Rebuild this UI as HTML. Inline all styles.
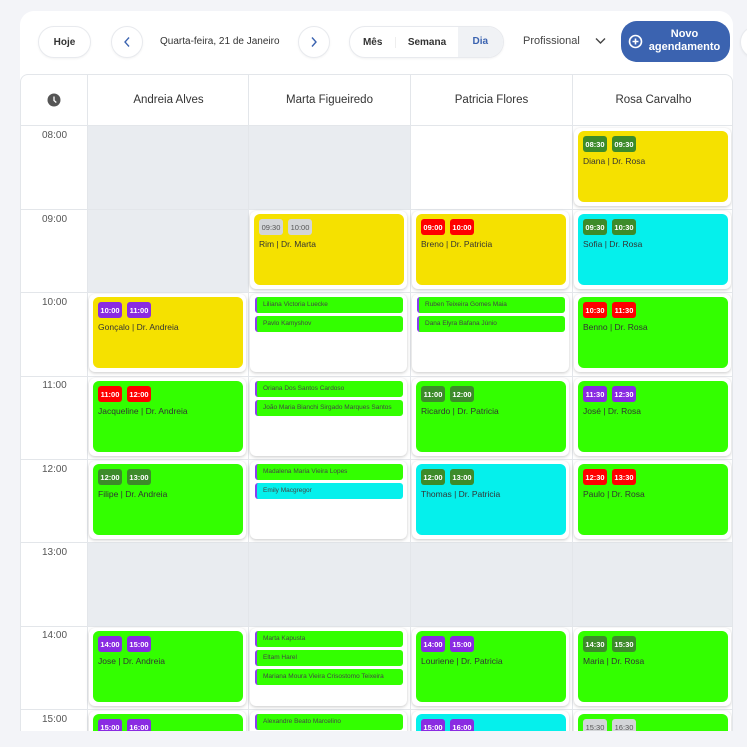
<!DOCTYPE html>
<html><head><meta charset="utf-8"><style>
*{box-sizing:border-box;margin:0;padding:0}
html,body{width:747px;height:747px;overflow:hidden}
body{background:#f3f4f8;font-family:"Liberation Sans",sans-serif;position:relative}
.root{position:absolute;left:0;top:0;width:747px;height:747px;overflow:hidden}
.wrap{position:absolute;left:20px;top:11px;width:713px;height:720px;background:#fff;border-radius:14px 14px 0 0}
.btn{position:absolute;border:1px solid #e8eaee;border-radius:18px;background:#fff;font-size:10px;color:#333;display:flex;align-items:center;justify-content:center;box-shadow:0 1px 2px rgba(0,0,0,.05)}
.grid{position:absolute;left:20px;top:74px;width:713px;height:657px;overflow:hidden;border:1px solid #e3e6ea;border-radius:8px 8px 0 0;border-bottom:none;background:#fff}
.a{position:absolute}
.vl{position:absolute;top:0;width:1px;height:700px;background:#e3e6ea}
.hl{position:absolute;left:0;width:713px;height:1px;background:#e3e6ea}
.gr{position:absolute;background:#e9ecf0}
.hd{position:absolute;top:0;height:50px;width:161px;display:flex;align-items:center;justify-content:center;font-size:11.5px;color:#333}
.tm{position:absolute;left:0;width:67px;text-align:center;font-size:10px;color:#555}
.card{position:absolute;width:157px;height:78px;background:#fff;border-radius:6px;box-shadow:0 1px 3px rgba(0,0,0,.22)}
.in{position:absolute;left:4px;top:3px;width:150px;height:71px;border-radius:6px}
.b{position:absolute;top:5px;width:24px;height:16px;border-radius:3px;color:#fff;font-size:7.5px;font-weight:bold;display:flex;align-items:center;justify-content:center}
.b1{left:5px}.b2{left:34px}
.nm{position:absolute;left:5px;top:25px;font-size:8.5px;color:#333}
.li{margin:0 0 3px 0;width:148px;height:16px;border-radius:3px;border-left:2px solid #8a3df0;font-size:6.5px;color:#444;padding-left:6px;line-height:16px;white-space:nowrap;overflow:hidden}
.lst{position:absolute;left:5px;top:3px}
.y{background:#f5e100}.g{background:#33ff00}.c{background:#05f0ec}
.p{background:#8a2be2}.r{background:#ff0000}.d{background:#3d8b2a}.s{background:#d3d5d8;color:#555;font-weight:normal}
</style></head><body><div class="root">
<div class="wrap"></div>
<div class="btn" style="left:38px;top:26px;width:53px;height:32px;font-weight:bold">Hoje</div>
<div class="btn" style="left:111px;top:26px;width:32px;height:32px"><svg width="8" height="12"><path d="M6 1.5L2 6l4 4.5" stroke="#3b63b0" stroke-width="1.4" fill="none"/></svg></div>
<div class="a" style="left:160px;top:36px;font-size:10px;color:#333">Quarta-feira, 21 de Janeiro</div>
<div class="btn" style="left:298px;top:26px;width:32px;height:32px"><svg width="8" height="12"><path d="M2 1.5L6 6l-4 4.5" stroke="#3b63b0" stroke-width="1.4" fill="none"/></svg></div>
<div class="btn" style="left:349px;top:26px;width:155px;height:32px;justify-content:flex-start;overflow:hidden">
<div style="width:46px;text-align:center;font-weight:bold">Mês</div>
<div style="width:63px;text-align:center;font-weight:bold;border-left:1px solid #eee">Semana</div>
<div style="width:46px;height:32px;line-height:32px;text-align:center;font-weight:bold;background:#f0f2f5;color:#3b63b0">Dia</div></div>
<div class="a" style="left:523px;top:35px;font-size:11px;color:#444">Profissional</div>
<svg class="a" style="left:595px;top:37px" width="11" height="8"><path d="M1 1.5l4.5 4.5 4.5-4.5" stroke="#444" stroke-width="1.4" fill="none"/></svg>
<div class="a" style="left:621px;top:21px;width:109px;height:41px;background:#3b63b0;border-radius:16px;color:#fff;font-size:11px;font-weight:bold;text-align:center;line-height:13px;padding-top:7px;padding-left:18px">Novo<br>agendamento</div>
<svg class="a" style="left:628px;top:34px" width="15" height="15"><circle cx="7.5" cy="7.5" r="6" stroke="#fff" stroke-width="1.6" fill="none"/><path d="M7.5 4.5v6M4.5 7.5h6" stroke="#fff" stroke-width="1.6"/></svg>
<div class="btn" style="left:740px;top:26px;width:32px;height:32px"></div>

<div class="grid">
<div class="gr" style="left:67px;top:51px;width:161px;height:167px"></div>
<div class="gr" style="left:228px;top:51px;width:162px;height:83px"></div>
<div class="gr" style="left:67px;top:468px;width:646px;height:83px"></div>
<div class="vl" style="left:66px"></div><div class="vl" style="left:227px"></div><div class="vl" style="left:389px"></div><div class="vl" style="left:551px"></div>
<div class="hl" style="top:50px"></div><div class="hl" style="top:134px"></div><div class="hl" style="top:217px"></div><div class="hl" style="top:301px"></div><div class="hl" style="top:384px"></div><div class="hl" style="top:467px"></div><div class="hl" style="top:551px"></div><div class="hl" style="top:634px"></div>
<svg class="a" style="left:26px;top:18px" width="14" height="14"><circle cx="7" cy="7" r="6.5" fill="#555"/><path d="M7 3.5v4l2.3 2" stroke="#fff" stroke-width="1.3" fill="none"/></svg>
<div class="hd" style="left:67px">Andreia Alves</div><div class="hd" style="left:228px">Marta Figueiredo</div><div class="hd" style="left:390px">Patricia Flores</div><div class="hd" style="left:552px">Rosa Carvalho</div>
<div class="tm" style="top:55px">08:00</div><div class="tm" style="top:139px">09:00</div><div class="tm" style="top:222px">10:00</div><div class="tm" style="top:305px">11:00</div><div class="tm" style="top:389px">12:00</div><div class="tm" style="top:472px">13:00</div><div class="tm" style="top:555px">14:00</div><div class="tm" style="top:639px">15:00</div>

<div class="card" style="left:553px;top:53px"><div class="in y"><div class="b b1 d">08:30</div><div class="b b2 d">09:30</div><div class="nm">Diana | Dr. Rosa</div></div></div>
<div class="card" style="left:229px;top:136px"><div class="in y"><div class="b b1 s">09:30</div><div class="b b2 s">10:00</div><div class="nm">Rim | Dr. Marta</div></div></div>
<div class="card" style="left:391px;top:136px"><div class="in y"><div class="b b1 r">09:00</div><div class="b b2 r">10:00</div><div class="nm">Breno | Dr. Patricia</div></div></div>
<div class="card" style="left:553px;top:136px"><div class="in c"><div class="b b1 d">09:30</div><div class="b b2 d">10:30</div><div class="nm">Sofia | Dr. Rosa</div></div></div>
<div class="card" style="left:68px;top:219px"><div class="in y"><div class="b b1 p">10:00</div><div class="b b2 p">11:00</div><div class="nm">Gonçalo | Dr. Andreia</div></div></div>
<div class="card" style="left:229px;top:219px"><div class="lst"><div class="li g">Liliana Victoria Luecke</div><div class="li g">Pavlo Kamyshov</div></div></div>
<div class="card" style="left:391px;top:219px"><div class="lst"><div class="li g">Ruben Teixeira Gomes Maia</div><div class="li g">Dana Elyra Bafana Júnio</div></div></div>
<div class="card" style="left:553px;top:219px"><div class="in g"><div class="b b1 r">10:30</div><div class="b b2 r">11:30</div><div class="nm">Benno | Dr. Rosa</div></div></div>
<div class="card" style="left:68px;top:303px"><div class="in g"><div class="b b1 r">11:00</div><div class="b b2 r">12:00</div><div class="nm">Jacqueline | Dr. Andreia</div></div></div>
<div class="card" style="left:229px;top:303px"><div class="lst"><div class="li g">Oriana Dos Santos Cardoso</div><div class="li g">João Maria Bianchi Sirgado Marques Santos</div></div></div>
<div class="card" style="left:391px;top:303px"><div class="in g"><div class="b b1 d">11:00</div><div class="b b2 d">12:00</div><div class="nm">Ricardo | Dr. Patricia</div></div></div>
<div class="card" style="left:553px;top:303px"><div class="in g"><div class="b b1 p">11:30</div><div class="b b2 p">12:30</div><div class="nm">José | Dr. Rosa</div></div></div>
<div class="card" style="left:68px;top:386px"><div class="in g"><div class="b b1 d">12:00</div><div class="b b2 d">13:00</div><div class="nm">Filipe | Dr. Andreia</div></div></div>
<div class="card" style="left:229px;top:386px"><div class="lst"><div class="li g">Madalena Maria Vieira Lopes</div><div class="li c">Emily Macgregor</div></div></div>
<div class="card" style="left:391px;top:386px"><div class="in c"><div class="b b1 d">12:00</div><div class="b b2 d">13:00</div><div class="nm">Thomas | Dr. Patricia</div></div></div>
<div class="card" style="left:553px;top:386px"><div class="in g"><div class="b b1 r">12:30</div><div class="b b2 r">13:30</div><div class="nm">Paulo | Dr. Rosa</div></div></div>
<div class="card" style="left:68px;top:553px"><div class="in g"><div class="b b1 p">14:00</div><div class="b b2 p">15:00</div><div class="nm">Jose | Dr. Andreia</div></div></div>
<div class="card" style="left:229px;top:553px"><div class="lst"><div class="li g">Marta Kapusta</div><div class="li g">Eltam Harel</div><div class="li g">Mariana Moura Vieira Crisostomo Teixeira</div></div></div>
<div class="card" style="left:391px;top:553px"><div class="in g"><div class="b b1 p">14:00</div><div class="b b2 p">15:00</div><div class="nm">Louriene | Dr. Patricia</div></div></div>
<div class="card" style="left:553px;top:553px"><div class="in g"><div class="b b1 d">14:30</div><div class="b b2 d">15:30</div><div class="nm">Maria | Dr. Rosa</div></div></div>
<div class="card" style="left:68px;top:636px"><div class="in g"><div class="b b1 p">15:00</div><div class="b b2 p">16:00</div></div></div>
<div class="card" style="left:229px;top:636px"><div class="lst"><div class="li g">Alexandre Beato Marcelino</div></div></div>
<div class="card" style="left:391px;top:636px"><div class="in c"><div class="b b1 p">15:00</div><div class="b b2 p">16:00</div></div></div>
<div class="card" style="left:553px;top:636px"><div class="in g"><div class="b b1 s">15:30</div><div class="b b2 s">16:30</div></div></div>
</div>
</div></body></html>
